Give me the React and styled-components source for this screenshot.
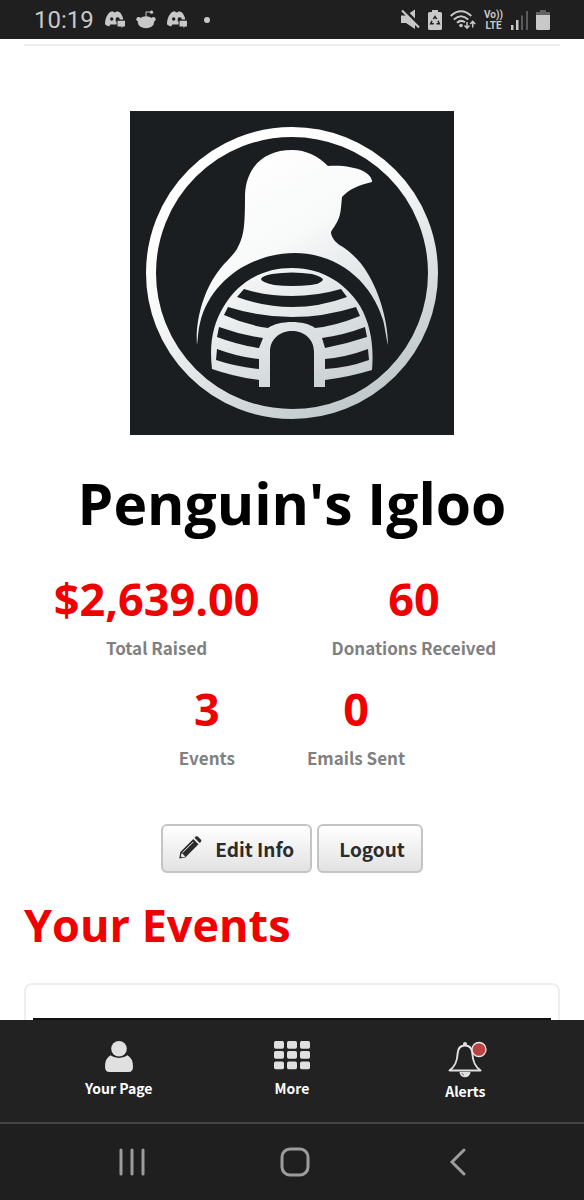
import styled, { createGlobalStyle } from "styled-components"

const GlobalStyle = createGlobalStyle`
    *{
    box-sizing:border-box;
    }
    body{
    margin:0;
    background-color:white;
    font-family:"Noto Sans CJK JP", sans-serif;
    }
`
const Container = styled.div`
    min-height:100vh;
    display:flex;
    flex-direction:column;
`
const StatusBar = styled.header`
    height:39px;
    padding:0 34px;
    display:flex;
    align-items:center;
    justify-content:space-between;
    background-color:#1f1f1f;
    color:#c8c8c8;
`
const StatusGroup = styled.div`
    display:flex;
    align-items:center;
    gap:${props => props.$gap}px;
`
const Clock = styled.time`
    font:400 24px/28px Roboto, sans-serif;
`
const Volte = styled.span`
    display:flex;
    flex-direction:column;
    font:700 10px/11px Roboto, sans-serif;
    text-align:center;
`
const Icon = styled.svg`
    display:block;
    flex:none;
    overflow:visible;
    fill:currentColor;
`
const Main = styled.main`
    flex:1;
    padding:5px 24px 0;
    display:flex;
    flex-direction:column;
`
const Divider = styled.hr`
    width:100%;
    height:2px;
    margin:0 0 65px;
    border:0;
    background-color:#eee;
`
const Logo = styled.svg`
    width:324px;
    height:324px;
    display:block;
    align-self:center;
    background-color:#1a1e21;
`
const Title = styled.h1`
    margin:28px 0 2px;
    font:700 57px/80px "Open Sans", sans-serif;
    color:black;
    text-align:center;
`
const Stats = styled.dl`
    height:110px;
    margin:0;
    padding-right:${props => props.$end || 0}px;
    display:flex;
    justify-content:center;
    gap:72px;
`
const Stat = styled.div`
    display:flex;
    flex-direction:column-reverse;
    justify-content:flex-end;
    text-align:center;
`
const Label = styled.dt`
    padding-top:4px;
    font-size:17px;
    font-weight:700;
    line-height:26px;
    color:#808080;
`
const Value = styled.dd`
    margin:0;
    padding-top:22px;
    font:700 45px/64px "Open Sans", sans-serif;
    color:#f00000;
`
const Actions = styled.div`
    margin-top:59px;
    display:flex;
    justify-content:center;
    gap:5px;
`
const Button = styled.button`
    height:49px;
    padding:0 16px 0 ${props => props.$left}px;
    display:flex;
    align-items:center;
    gap:13px;
    border:2px solid #c4c4c4;
    border-radius:6px;
    background:linear-gradient(#ffffff, #e2e2e2);
    color:#2b2b2b;
    font-family:inherit;
    font-size:19px;
    font-weight:700;
    line-height:28px;
    cursor:pointer;
`
const Heading = styled.h2`
    margin:20px 0 26px;
    font:700 45px/64px "Open Sans", sans-serif;
    color:#f00000;
`
const EventCard = styled.section`
    flex:1;
    padding:33px 7px 0;
    display:flex;
    border:2px solid #eee;
    border-bottom:0;
    border-radius:8px 8px 0 0;
`
const EventBanner = styled.div`
    flex:1;
    min-height:1px;
    background-color:#111;
`
const TabBar = styled.nav`
    height:104px;
    padding:21px 32px 0;
    display:flex;
    justify-content:space-around;
    background-color:#222;
    border-bottom:2px solid #444;
`
const Tab = styled.a`
    flex:1;
    display:flex;
    flex-direction:column;
    align-items:center;
    gap:6px;
    color:#e0e0e0;
    text-decoration:none;
`
const TabLabel = styled.span`
    font-size:14px;
    font-weight:700;
    line-height:20px;
    color:white;
`
const SystemBar = styled.footer`
    height:76px;
    padding:0 45px 0 50px;
    display:flex;
    background-color:#1f1f1f;
`
const SystemButton = styled.button`
    flex:1;
    padding:0;
    display:flex;
    align-items:center;
    justify-content:center;
    border:0;
    background:none;
    color:#9c9c9c;
    cursor:pointer;
`

const DiscordIcon = () => (
  <Icon width="20" height="17" viewBox="0 0 20 17" aria-hidden="true">
    <path d="M5.5 .8 8 .3l.7 1h2.2l.8-1 2.6.6c2 1.3 3.5 4.6 4 7.6h-6.7v5.1H8l-2.7 0-1.2 1.8C2.3 15 .9 14.3 0 13.300 0 8.500 1.900 3 5.500 .8Z" />
    <circle cx="6.700" cy="8" r="1.700" fill="#1f1f1f" />
    <path d="M12.500 6.200a1.800 1.800 0 0 0-1.800 2v2.400h1.200V9.200h2.500A2 2 0 0 0 12.500 6.200Z" fill="#1f1f1f" />
    <path d="M12.500 9.700h7.500v5.800h-2L16.500 17v-1.500h-4Z" />
  </Icon>
)

const RedditIcon = () => (
  <Icon width="20" height="19" viewBox="0 0 21 19" aria-hidden="true">
    <ellipse cx="10.500" cy="12.500" rx="8.500" ry="6.300" />
    <circle cx="2.700" cy="9.300" r="2.300" />
    <circle cx="18.300" cy="9.300" r="2.300" />
    <circle cx="16.300" cy="1.800" r="1.700" />
    <path d="M10.500 7V1.500L16 1.800" fill="none" stroke="currentColor" />
  </Icon>
)

const MuteIcon = () => (
  <Icon width="19" height="21" viewBox="0 0 19 21" aria-hidden="true">
    <path d="M0 6.500h5l9-6V20l-9-6H0Z" />
    <path d="M2-.5 19 16.500" stroke="#1f1f1f" strokeWidth="3" />
    <path d="M1 1.500 18 18.500" stroke="currentColor" strokeWidth="2.200" />
  </Icon>
)

const RecycleBatteryIcon = () => (
  <Icon width="14" height="20" viewBox="0 0 14 20" aria-hidden="true">
    <path d="M4 0h6v2h2.500Q14 2 14 3.500v15Q14 20 12.500 20h-11Q0 20 0 18.500v-15Q0 2 1.500 2H4Z" />
    <path d="M5.300 9.200 7 6.700l1.700 2.500M10 10.700l1.300 3H8.500M5.800 13.700H2.700L4 10.900" fill="none" stroke="#1f1f1f" strokeWidth="1.500" />
  </Icon>
)

const WifiIcon = () => (
  <Icon width="26" height="20" viewBox="0 0 26 20" aria-hidden="true">
    <g fill="none" stroke="currentColor" strokeWidth="2">
      <path d="M.7 6Q11 -3.500 21.300 6M3.800 9.500Q11 3 18.200 9.500M7 12.800Q11 9.200 15 12.300" />
      <path d="M17 12V18M14.500 15.500 17 18.200l2.500-2.700M22.700 17.500V11.500M20.200 14l2.500-2.700 2.500 2.700" strokeWidth="1.500" />
    </g>
    <circle cx="11" cy="15.500" r="1.800" />
  </Icon>
)

const SignalIcon = () => (
  <Icon width="17" height="20" viewBox="0 0 17 20" aria-hidden="true">
    <path d="M0 15h2.500v5H0ZM5 10h2.500v10H5Z" />
    <path d="M10 5.500h2V20h-2ZM15 1h2v19h-2Z" opacity=".35" />
  </Icon>
)

const BatteryIcon = () => (
  <Icon width="14" height="20" viewBox="0 0 14 20" aria-hidden="true">
    <path d="M4 0h6v2h4v3H0V2h4Z" opacity=".4" />
    <path d="M0 5h14v13.500Q14 20 12.500 20h-11Q0 20 0 18.500Z" />
  </Icon>
)

const PencilIcon = () => (
  <Icon width="23" height="26" viewBox="0 0 23 26" aria-hidden="true">
    <path d="m15.500 1.800 1.300-1.200q1-.9 2 0l3.200 3.200q.9 1 0 2L20.700 7Z" />
    <path d="M14.300 3 19.500 8.200 6.300 21.400.3 22.500 1.300 16Z" />
    <path d="m3.500 16.700 10.800-10.800" stroke="#f0f0f0" strokeWidth="1" />
    <path d="m2.500 17.500 1.800.4.400 1.700 1.600.5-.8.800-2.600.4-1-1Z" fill="#f0f0f0" />
  </Icon>
)

const UserIcon = () => (
  <Icon width="28" height="31" viewBox="0 0 28 31" aria-hidden="true">
    <circle cx="14" cy="7.800" r="7.800" />
    <path d="M5.500 14.300Q9 17 14 17t8.500-2.700Q28 17.500 28 25.500 28 31 23.500 31h-19Q0 31 0 25.500 0 17.500 5.500 14.300Z" />
  </Icon>
)

const GridIcon = () => (
  <Icon width="36" height="31" viewBox="0 0 36 31" aria-hidden="true">
    {[0, 10, 20.500].map(y =>
      [0, 13, 26].map(x => <rect key={x + "-" + y} x={x} y={y} width="10" height="7.700" rx="1.700" />)
    )}
  </Icon>
)

const BellIcon = () => (
  <Icon width="44" height="34" viewBox="-5 -1 44 34" aria-hidden="true">
    <circle cx="17" cy="2" r="2" />
    <path d="M11.500 30h11a5.500 5.300 0 0 1-11 0Z" />
    <path d="M17 3.500C12 3.500 10 7 9.700 11 9.200 20 7 24.500 1.500 28.500h31C27 24.500 24.800 20 24.300 11 24 7 22 3.500 17 3.500Z" fill="#222" stroke="currentColor" strokeWidth="2" strokeLinejoin="round" />
    <path d="M13.800 31q.5 1.800 2.200 2.200" fill="none" stroke="#555" strokeWidth=".8" />
    <circle cx="31" cy="7.500" r="7" fill="#b94343" stroke="#f2e6e6" strokeWidth="1.300" />
  </Icon>
)

const PenguinLogo = () => (
  <Logo viewBox="0 0 324 324" role="img" aria-label="Penguin's Igloo logo">
    <defs>
      <linearGradient id="silver" gradientUnits="userSpaceOnUse" x1="100" y1="50" x2="240" y2="290">
        <stop offset="0" stopColor="#ffffff" />
        <stop offset=".35" stopColor="#f8f9f9" />
        <stop offset="1" stopColor="#c0c8cb" />
      </linearGradient>
    </defs>
    <circle cx="162" cy="162" r="141" fill="none" stroke="url(#silver)" strokeWidth="10" />
    <path
      fill="url(#silver)"
      d="M162 39C176 39 188 45 198 55C211 54 225 56 233 60C239 63 242 67 242 71C229 74 219 78 212 86C211 96 211 103 208 109C205 116 201 119 201 122C202 128 207 133 213 136C223 143 232 152 238 163C249 181 258 210 258 234C256 226 255 216 253 209C241 169 206 142 165 142C121 142 80 170 70 212C68 220 68 227 67 234C65 209 74 180 87 162C94 152 101 147 107 138C114 125 115 116 115 84C116 56 134 39 162 39Z"
    />
    <path
      fill="url(#silver)"
      d="M162 157C194 157 217 174 230 195C241 214 244 236 242 259Q219 266 195 269V276H184V241C184 213 140 213 140 241V276H129V269Q105 266 82 258C79 232 83 213 94 195C107 173 130 157 162 157Z"
    />
    <g fill="#1a1e21">
      <path d="M131 168Q132 165 142 163Q162 160 182 163Q193 166 193 169Q190 173 181 174Q162 176 144 174Q131 171 131 168Z" />
      <path d="M114 178Q137 185 162 185Q187 185 211 178L217 186Q190 196 162 196Q134 196 107 186Z" />
      <path d="M98 196Q130 206 162 206Q194 206 226 196L230 205Q205 215 185 217C175 209 149 209 138 217Q116 214 94 204Z" />
      <path d="M89 216Q111 224 133 227L129 237Q108 234 87 226Z" />
      <path d="M235 216Q214 224 192 227L195 237Q216 233 237 226Z" />
      <path d="M87 238Q108 246 129 248V258Q107 256 86 249Z" />
      <path d="M238 238Q217 246 195 248V258Q217 257 239 249Z" />
    </g>
  </Logo>
)

const App = () => {
  return (
    <Container>
      <GlobalStyle />
      <StatusBar>
        <StatusGroup $gap={11}>
          <Clock>10:19</Clock>
          <DiscordIcon />
          <RedditIcon />
          <DiscordIcon />
          <Icon width="16" height="6" viewBox="0 0 16 6" aria-hidden="true">
            <circle cx="9" cy="3" r="3" />
          </Icon>
        </StatusGroup>
        <StatusGroup $gap={8}>
          <MuteIcon />
          <RecycleBatteryIcon />
          <WifiIcon />
          <Volte>
            <span>Vo))</span>
            <span>LTE</span>
          </Volte>
          <SignalIcon />
          <BatteryIcon />
        </StatusGroup>
      </StatusBar>

      <Main>
        <Divider />
        <PenguinLogo />
        <Title>Penguin's Igloo</Title>
        <Stats $end={34}>
          <Stat>
            <Label>Total Raised</Label>
            <Value>$2,639.00</Value>
          </Stat>
          <Stat>
            <Label>Donations Received</Label>
            <Value>60</Value>
          </Stat>
        </Stats>
        <Stats>
          <Stat>
            <Label>Events</Label>
            <Value>3</Value>
          </Stat>
          <Stat>
            <Label>Emails Sent</Label>
            <Value>0</Value>
          </Stat>
        </Stats>
        <Actions>
          <Button $left={16}>
            <PencilIcon />
            Edit Info
          </Button>
          <Button $left={20}>Logout</Button>
        </Actions>
        <Heading>Your Events</Heading>
        <EventCard>
          <EventBanner />
        </EventCard>
      </Main>

      <TabBar>
        <Tab href="#page">
          <UserIcon />
          <TabLabel>Your Page</TabLabel>
        </Tab>
        <Tab href="#more">
          <GridIcon />
          <TabLabel>More</TabLabel>
        </Tab>
        <Tab href="#alerts">
          <BellIcon />
          <TabLabel>Alerts</TabLabel>
        </Tab>
      </TabBar>
      <SystemBar>
        <SystemButton aria-label="Recent apps">
          <Icon width="26" height="28" viewBox="0 0 26 28">
            <path d="M2 2v24M13 2v24M24 2v24" stroke="currentColor" strokeWidth="3" strokeLinecap="round" />
          </Icon>
        </SystemButton>
        <SystemButton aria-label="Home">
          <Icon width="30" height="30" viewBox="0 0 30 30">
            <rect x="2" y="2" width="26" height="26" rx="8" fill="none" stroke="currentColor" strokeWidth="3" />
          </Icon>
        </SystemButton>
        <SystemButton aria-label="Back">
          <Icon width="16" height="28" viewBox="0 0 16 28">
            <path d="M14 2 2 14l12 12" fill="none" stroke="currentColor" strokeWidth="3" strokeLinecap="round" />
          </Icon>
        </SystemButton>
      </SystemBar>
    </Container>
  )
}

export default App
